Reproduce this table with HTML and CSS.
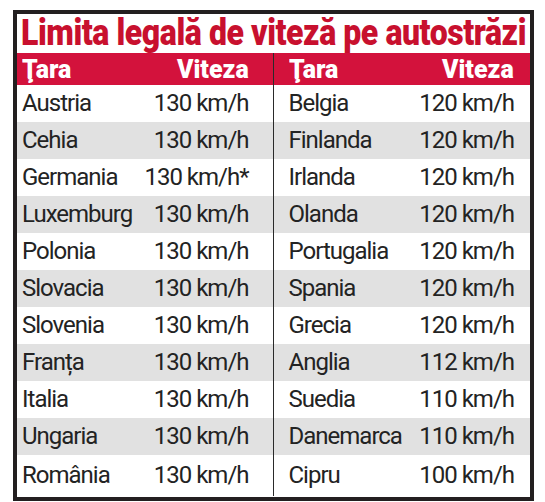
FILE: index.html
```html
<!DOCTYPE html>
<html lang="ro">
<head>
    <meta charset="UTF-8">
    <title>Limita legală de viteză pe autostrăzi</title>
    <link rel="stylesheet" href="styles.css">
</head>
<body>
    <div class="board">
        <h1 class="title"><span>Limita legală de viteză pe autostrăzi</span></h1>

        <table class="speeds">
            <thead>
                <tr>
                    <th class="country"><span>Ţara</span></th>
                    <th class="speed"><span>Viteza</span></th>
                    <th class="country right"><span>Ţara</span></th>
                    <th class="speed right"><span>Viteza</span></th>
                </tr>
            </thead>
            <tbody>
                <tr><td class="country">Austria</td><td class="speed">130 km/h</td><td class="country right">Belgia</td><td class="speed right">120 km/h</td></tr>
                <tr><td class="country">Cehia</td><td class="speed">130 km/h</td><td class="country right">Finlanda</td><td class="speed right">120 km/h</td></tr>
                <tr><td class="country">Germania</td><td class="speed">130 km/h*</td><td class="country right">Irlanda</td><td class="speed right">120 km/h</td></tr>
                <tr><td class="country">Luxemburg</td><td class="speed">130 km/h</td><td class="country right">Olanda</td><td class="speed right">120 km/h</td></tr>
                <tr><td class="country">Polonia</td><td class="speed">130 km/h</td><td class="country right">Portugalia</td><td class="speed right">120 km/h</td></tr>
                <tr><td class="country">Slovacia</td><td class="speed">130 km/h</td><td class="country right">Spania</td><td class="speed right">120 km/h</td></tr>
                <tr><td class="country">Slovenia</td><td class="speed">130 km/h</td><td class="country right">Grecia</td><td class="speed right">120 km/h</td></tr>
                <tr><td class="country">Franța</td><td class="speed">130 km/h</td><td class="country right">Anglia</td><td class="speed right">112 km/h</td></tr>
                <tr><td class="country">Italia</td><td class="speed">130 km/h</td><td class="country right">Suedia</td><td class="speed right">110 km/h</td></tr>
                <tr><td class="country">Ungaria</td><td class="speed">130 km/h</td><td class="country right">Danemarca</td><td class="speed right">110 km/h</td></tr>
                <tr><td class="country">România</td><td class="speed">130 km/h</td><td class="country right">Cipru</td><td class="speed right">100 km/h</td></tr>
            </tbody>
        </table>
    </div>
</body>
</html>
```

FILE: styles.css
```css
* {
    margin: 0;
    padding: 0;
    box-sizing: border-box;
}

body {
    background: #fff;
    font-family: Roboto, 'Liberation Sans', sans-serif;
    color: #232323;
    padding: 10px 11px 0 13px;
}

.board {
    width: 521px;
    height: 491px;
    border: 4px solid #231f20;
    background: #fff;
    overflow: hidden;
}

/* Title: condensed by scaling, negative margin keeps the box inside */
.title {
    height: 39px;
    padding-left: 4px;
    white-space: nowrap;
    color: #c8102e;
    font-size: 36px;
    font-weight: 900;
    line-height: 38px;
    letter-spacing: -0.5px;
}

.title span {
    display: inline-block;
    margin-right: -80px;
    transform: scaleX(0.89);
    transform-origin: left center;
}

/* Table */
.speeds {
    width: 513px;
    border-collapse: collapse;
    table-layout: fixed;
}

.speeds thead tr {
    background: #d3123c;
    color: #fff;
    height: 32px;
}

.speeds th {
    font-size: 26px;
    font-weight: 900;
    line-height: 30px;
    white-space: nowrap;
}

.speeds th span {
    display: inline-block;
    transform: scaleX(0.96);
}

.speeds th.country span {
    transform-origin: left center;
}

.speeds th.speed span {
    transform-origin: right center;
}

.speeds tbody tr {
    height: 37px;
}

.speeds tbody tr:nth-child(even) {
    background: #e1e1e1;
}

.speeds tbody tr:last-child {
    height: 41px;
}

.speeds td {
    font-size: 24px;
    line-height: 37px;
    white-space: nowrap;
    letter-spacing: -1px;
}

.country {
    text-align: left;
    padding-left: 5px;
}

.speed {
    text-align: right;
    padding-right: 24px;
}

.country.right {
    padding-left: 15px;
    border-left: 1px solid #2a2a2a;
}

.speed.right {
    padding-right: 16px;
}

.speeds th:nth-child(1) { width: 112px; }
.speeds th:nth-child(2) { width: 144px; }
.speeds th:nth-child(3) { width: 120px; }
.speeds th:nth-child(4) { width: 137px; }
```
